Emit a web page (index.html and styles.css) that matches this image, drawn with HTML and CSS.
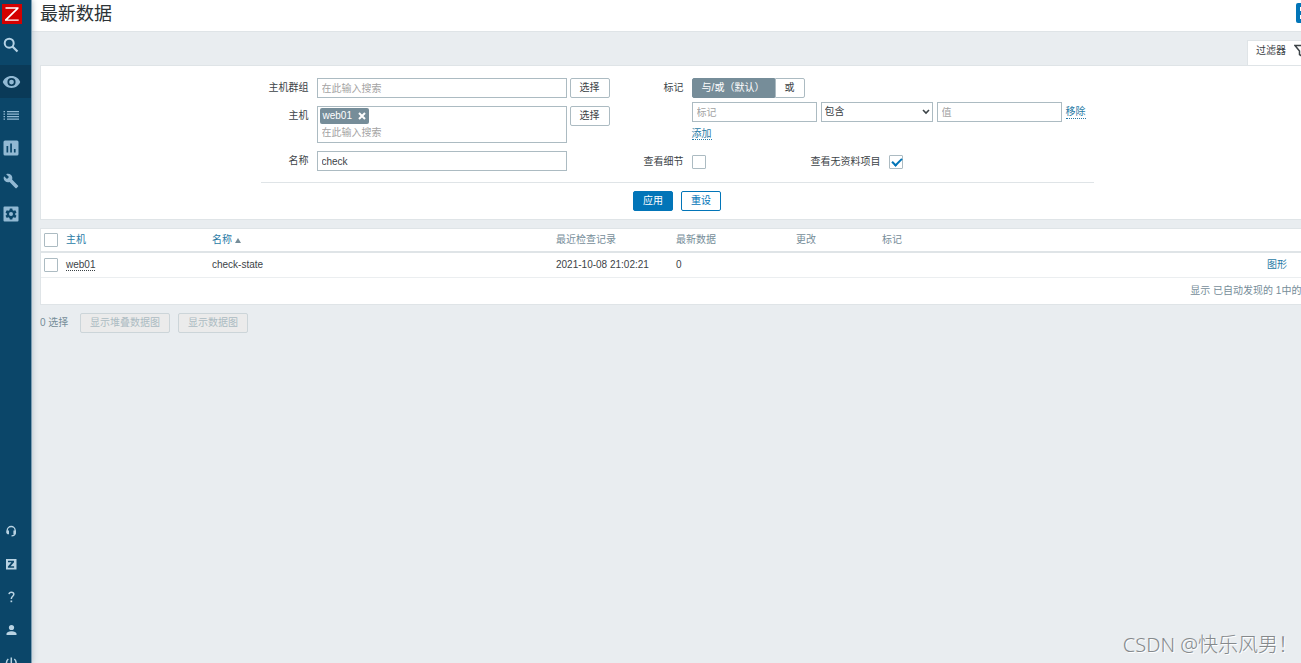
FILE: index.html
```html
<!DOCTYPE html>
<html lang="zh-CN">
<head>
<meta charset="utf-8">
<title>最新数据</title>
<link rel="stylesheet" href="styles.css">
</head>
<body>
<div class="app">
  <aside class="sidebar">
    <a class="logo" href="#" aria-label="Zabbix"><svg viewBox="0 0 20 20"><path d="M3.5 3.3h13v1.4L5.5 15.5h11.2v1.3H3v-1.4L14 4.700H3.500z"/></svg></a>
    <a class="search" href="#" aria-label="搜索"><svg viewBox="0 0 16 16"><circle cx="6.200" cy="6.200" r="4.500" fill="none" stroke="currentColor" stroke-width="2"/><path d="M9.500 9.500l5 5" stroke="currentColor" stroke-width="2.200"/></svg></a>
    <nav class="menu">
      <a class="item active" href="#" aria-label="监测"><svg class="eye" viewBox="0 0 20 14"><path fill-rule="evenodd" d="M10 .8C5.500.8 2.200 3.500.8 7c1.400 3.500 4.700 6.200 9.200 6.200s7.800-2.700 9.200-6.200C17.800 3.500 14.500.8 10 .8zM10 11.300a4.300 4.300 0 1 1 0-8.600 4.300 4.300 0 0 1 0 8.600z"/><circle cx="10" cy="7" r="2.500"/></svg></a>
      <a class="item" href="#" aria-label="资产记录"><svg viewBox="0 0 16 16"><path d="M.5 4H2v1.200H.5zM4 4h12v1.200H4zM.5 6.500H2v1.200H.5zM4 6.500h12v1.200H4zM.5 9H2v1.200H.5zM4 9h12v1.200H4zM.5 11.500H2v1.200H.5zM4 11.500h12v1.200H4z"/></svg></a>
      <a class="item" href="#" aria-label="报表"><svg viewBox="0 0 16 16"><path fill-rule="evenodd" d="M2 .5h12a1.500 1.500 0 0 1 1.500 1.500v12a1.500 1.500 0 0 1-1.500 1.500H2A1.500 1.500 0 0 1 .5 14V2A1.500 1.500 0 0 1 2 .5zM3.500 6v6.500h1.700V6zM7.200 3.500v9h1.700v-9zM10.900 9v3.500h1.700V9z"/></svg></a>
      <a class="item" href="#" aria-label="配置"><svg viewBox="0 0 24 24"><path d="M22.700 19l-9.100-9.100c.9-2.300.4-5-1.500-6.900-2-2-5-2.400-7.400-1.300L9 6 6 9 1.600 4.700C.4 7.100.9 10.100 2.900 12.100c1.900 1.900 4.600 2.400 6.900 1.500l9.100 9.100c.4.4 1 .4 1.400 0l2.300-2.300c.5-.4.5-1.100.1-1.400z"/></svg></a>
      <a class="item" href="#" aria-label="管理"><svg viewBox="0 0 16 16"><path fill-rule="evenodd" d="M1.500.5h13a1 1 0 0 1 1 1v13a1 1 0 0 1-1 1h-13a1 1 0 0 1-1-1v-13a1 1 0 0 1 1-1zM6.800 2.500l-.3 1.700-1.100.6-1.600-.6-1.300 2.200L3.800 7.500v1.200L2.500 9.700l1.300 2.200 1.600-.6 1.100.6.3 1.600h2.500l.3-1.600 1.100-.6 1.600.6 1.200-2.200-1.300-1V7.500l1.300-1.100-1.200-2.200-1.600.6-1.100-.6-.3-1.700z"/><circle cx="8" cy="8" r="2"/></svg></a>
    </nav>
    <nav class="menu support">
      <a class="item" href="#" aria-label="支持"><svg viewBox="0 0 16 16"><path d="M4.200 10V7.500a4 4 0 0 1 8 0V10M12.200 10c0 2.200-1.500 2.800-3.700 2.800" fill="none" stroke="currentColor" stroke-width="1.300"/><path d="M3.500 7.500h2.500v3.700H4.500l-1-1zM10.400 7.500h2.500v2.700l-1 1h-1.500z"/></svg></a>
      <a class="item" href="#" aria-label="Share"><svg viewBox="0 0 16 16"><path fill-rule="evenodd" d="M3 3h10.500v10.500H3zM5 4.800v1.500h3.500L4.900 10.400v1.400h6.200v-1.500H7.500L11 6.200V4.800z"/></svg></a>
      <a class="item" href="#" aria-label="帮助"><svg viewBox="0 0 16 16"><path d="M6 5.200C6.200 3.800 7.100 3.200 8.300 3.200c1.500 0 2.500.8 2.500 2.100C10.800 7.300 8.300 7.300 8.300 10" fill="none" stroke="currentColor" stroke-width="1.500"/><path d="M7.500 11.500h1.700v1.700H7.500z"/></svg></a>
      <a class="item" href="#" aria-label="用户"><svg viewBox="0 0 16 16"><circle cx="8.500" cy="5.500" r="2.600"/><path d="M3.500 13v-1.200c0-1.800 3-2.600 5-2.600s5 .8 5 2.600V13z"/></svg></a>
      <a class="item" href="#" aria-label="退出"><svg viewBox="0 0 16 16"><path d="M8.300 2.500v6M5.300 4a4.800 4.800 0 1 0 6 0" fill="none" stroke="currentColor" stroke-width="1.500"/></svg></a>
    </nav>
  </aside>
  <main class="main">
    <div class="page">
      <header class="header">
        <h1>最新数据</h1>
        <button class="kiosk" type="button" aria-label="全屏"><svg viewBox="0 0 20 20"><path d="M5 8V5h3M12 5h3v3M15 12v3h-3M8 15H5v-3" fill="none" stroke="#fff" stroke-width="2"/></svg></button>
      </header>
      <div class="tabs"><a class="tab" href="#">过滤器<svg viewBox="0 0 14 14"><path d="M1 1.500h12L8.500 7v5.500l-3-2V7z" fill="none" stroke="currentColor" stroke-width="1.500"/></svg></a></div>
      <form class="panel filter">
        <div class="filter-body">
          <div class="fields fields-left">
            <label for="groups">主机群组</label>
            <div class="line"><input class="box wide" id="groups" type="text" placeholder="在此输入搜索"><button class="btn select-btn" type="button">选择</button></div>
            <label for="hosts">主机</label>
            <div class="line"><div class="box wide multi"><span class="chip">web01<button type="button" aria-label="移除 web01"><svg viewBox="0 0 8 8"><path d="M1 1l6 6M7 1L1 7" stroke="currentColor" stroke-width="2"/></svg></button></span><input id="hosts" type="text" placeholder="在此输入搜索"></div><button class="btn select-btn" type="button">选择</button></div>
            <label for="name">名称</label>
            <div class="line"><input class="box wide" id="name" type="text" value="check"></div>
          </div>
          <div class="fields fields-right">
            <span class="caption">标记</span>
            <div class="tags">
              <div class="toggle"><input type="radio" name="op" id="andor" checked><label for="andor">与/或（默认）</label><input type="radio" name="op" id="or"><label for="or">或</label></div>
              <div class="tag-row">
                <input class="box tag-input" type="text" placeholder="标记" aria-label="标记">
                <span class="drop"><select class="box" aria-label="运算符"><option>包含</option></select><svg viewBox="0 0 8 6"><path d="M1 1l3 3 3-3" fill="none" stroke="currentColor" stroke-width="1.600"/></svg></span>
                <input class="box tag-input" type="text" placeholder="值" aria-label="值">
                <a class="dotted" href="#">移除</a>
              </div>
              <div class="add"><a class="dotted" href="#">添加</a></div>
            </div>
            <label for="details">查看细节</label>
            <div class="checks"><input class="check" type="checkbox" id="details"><label for="nodata">查看无资料项目</label><input class="check" type="checkbox" id="nodata" checked></div>
          </div>
        </div>
        <div class="actions"><button class="btn primary" type="button">应用</button><button class="btn outline" type="reset">重设</button></div>
      </form>
      <table class="panel data">
        <colgroup><col class="c-check"><col class="c-host"><col class="c-name"><col class="c-time"><col class="c-value"><col class="c-change"><col><col class="c-graph"></colgroup>
        <thead><tr><th><input class="check" type="checkbox" aria-label="全选"></th><th><a href="#">主机</a></th><th><a href="#">名称<i class="sort"></i></a></th><th>最近检查记录</th><th>最新数据</th><th>更改</th><th>标记</th><th></th></tr></thead>
        <tbody><tr><td><input class="check" type="checkbox" aria-label="选择 check-state"></td><td><a class="host" href="#">web01</a></td><td>check-state</td><td>2021-10-08 21:02:21</td><td>0</td><td></td><td></td><td><a href="#">图形</a></td></tr></tbody>
        <tfoot><tr><td colspan="8">显示 已自动发现的 1中的1</td></tr></tfoot>
      </table>
      <div class="bulk"><span>0 选择</span><button class="btn" type="button" disabled>显示堆叠数据图</button><button class="btn" type="button" disabled>显示数据图</button></div>
    </div>
  </main>
  <div class="watermark">CSDN @快乐风男！</div>
</div>
</body>
</html>
```
FILE: styles.css
```css
* { box-sizing: border-box; }
body { margin: 0; background: #e9edf0; color: #3c4347; }
body, button, input, select { font-family: "Liberation Sans", "Noto Sans CJK SC", sans-serif; font-size: 10px; line-height: 14px; }
a { color: #2a7ba6; text-decoration: none; }
svg { display: block; fill: currentColor; }
.app { display: flex; height: 100vh; overflow: hidden; position: relative; }

.sidebar { flex: 0 0 32px; display: flex; flex-direction: column; background: #0b4669; border-right: 1px solid #7b9db3; box-shadow: 0 0 6px #aebbc4; overflow: hidden; z-index: 1; }
.sidebar a { color: #92b9d3; }
.sidebar .logo { width: 20px; height: 20px; margin: 4px 0 0 2px; background: #d40000; color: #fff; }
.sidebar .search { padding: 13px 0 12px 3px; color: #b4d2e5; }
.sidebar svg { width: 16px; height: 16px; }
.sidebar .logo svg { width: 20px; height: 20px; }
.item { display: flex; align-items: center; height: 33px; padding-left: 3px; }
.item.active { background: #0a3a58; padding-left: 2px; }
.sidebar .eye { width: 19px; height: 14px; }
.support { margin: auto 0 -16px; }
.sidebar .support .item { color: #b9d3e3; }

.main { flex: 1; min-width: 0; overflow: hidden; }
/* The page keeps a gutter that runs past the right edge of the window. */
.page { width: calc(100% + 23px); }
.header { display: flex; justify-content: space-between; align-items: flex-start; height: 32px; padding: 3px 8px; background: #fff; border-bottom: 1px solid #dfe4e7; }
h1 { margin: 0; font-size: 18px; line-height: 22px; font-weight: 400; color: #2c3336; }
.kiosk { width: 20px; height: 20px; padding: 0; border: 0; border-radius: 2px; background: #0275b8; }
.tabs { display: flex; justify-content: flex-end; padding: 8px 10px 0 0; }
.tab { display: flex; gap: 8px; height: 25px; width: 67px; padding: 3px 0 0 8px; background: #fff; border: 1px solid #dfe4e7; border-bottom: 0; color: #3c4347; white-space: nowrap; }
.tab svg { width: 14px; height: 14px; flex: none; }
.panel { margin: 0 10px 0 8px; background: #fff; border: 1px solid #dfe4e7; }

.filter { padding: 12px 0 8px; }
.filter-body { display: flex; justify-content: space-between; width: 833px; margin: 0 auto; padding-bottom: 10px; border-bottom: 1px solid #dfe4e7; }
.fields { display: grid; column-gap: 8px; align-items: start; align-content: start; text-align: right; }
.fields > label, .caption { padding-top: 3px; white-space: nowrap; }
.fields-left { grid-template-columns: 48px auto; row-gap: 8px; }
.fields-right { grid-template-columns: 40px 402px; row-gap: 11px; }
.line { display: flex; align-items: flex-start; gap: 3px; }
.box { height: 20px; padding: 0 4px; border: 1px solid #acbbc2; border-radius: 0; background: #fff; color: #3c4347; outline: 0; }
input::placeholder { color: #a3a3a3; opacity: 1; }
.wide { width: 250px; }
.multi { display: flex; flex-direction: column; align-items: flex-start; height: 37px; padding: 1px 2px; }
.multi input { width: 100%; height: 16px; padding: 0 2px; border: 0; outline: 0; }
.chip { display: flex; align-items: center; gap: 6px; height: 16px; padding: 0 3px; background: #768d99; color: #fff; border-radius: 2px; }
.chip button { padding: 0; border: 0; background: none; color: #fff; }
.chip svg { width: 8px; height: 8px; }
.btn { height: 20px; padding: 0 9px; border: 1px solid #acbbc2; border-radius: 2px; background: #fff; color: #3c4347; white-space: nowrap; }
.select-btn { width: 40px; }
.toggle { display: flex; }
.toggle input { position: absolute; opacity: 0; }
.toggle label { height: 20px; padding: 2px 9px; border: 1px solid #acbbc2; border-radius: 0 2px 2px 0; white-space: nowrap; }
.toggle label:first-of-type { width: 83px; border-radius: 2px 0 0 2px; text-align: center; }
.toggle :checked + label { background: #768d99; border-color: #768d99; color: #fff; }
.tag-row { display: flex; align-items: center; gap: 4px; margin-top: 4px; }
.tag-input { width: 125px; }
.drop { position: relative; width: 112px; }
.drop select { width: 100%; padding: 0 3px; appearance: none; display: block; }
.drop svg { position: absolute; right: 3px; top: 7px; width: 8px; height: 6px; pointer-events: none; }
.dotted { border-bottom: 1px dotted #2a7ba6; line-height: 12px; }
.add { margin-top: 5px; text-align: left; }
.checks { display: flex; align-items: center; height: 20px; }
.checks label { margin: 0 8px 0 105px; }
.check { appearance: none; display: block; width: 14px; height: 14px; margin: 0; border: 1px solid #acbbc2; border-radius: 1px; background: #fff; }
.check:checked::before { content: ""; display: block; width: 8px; height: 4px; margin: 3px 2px; border: solid #0275b8; border-width: 0 0 2px 2px; transform: rotate(-45deg); }
.checks .check:checked::before { margin-top: 2px; }
.actions { display: flex; justify-content: center; gap: 8px; padding-top: 8px; }
.primary, .outline { width: 40px; border-color: #0275b8; }
.primary { background: #0275b8; color: #fff; }
.outline { color: #0275b8; }

.data { width: calc(100% - 18px); margin-top: 8px; border-collapse: separate; border-spacing: 0; table-layout: fixed; }
.data th, .data td { padding: 0 4px; text-align: left; font-weight: 400; white-space: nowrap; }
.data .check { margin-left: -1px; }
.data th { height: 24px; border-bottom: 2px solid #dfe4e7; color: #768d99; }
.data td { height: 25px; border-bottom: 1px solid #ebeef0; }
.data tfoot td { height: 26px; padding-right: 6px; border: 0; text-align: right; color: #768d99; }
.c-check { width: 21px; }
.c-host { width: 146px; }
.c-name { width: 344px; }
.c-time { width: 120px; }
.c-value { width: 120px; }
.c-change { width: 86px; }
.c-graph { width: 50px; }
.sort { display: inline-block; margin-left: 3px; border: solid transparent; border-width: 0 3px 5px; border-bottom-color: #768d99; }
.host { color: #3c4347; border-bottom: 1px dotted #3c4347; }
.bulk { display: flex; align-items: center; padding: 8px; color: #768d99; }
.bulk span { width: 40px; }
.bulk .btn { margin-right: 8px; }
.bulk .btn:disabled { background: #ebebeb; border-color: #ccd5d9; color: #acbbc2; }
.watermark { position: absolute; right: 3px; bottom: 4px; z-index: 2; color: #85898c; font: 300 20px/28px "Noto Sans", "Noto Sans CJK SC", sans-serif; text-shadow: 1px 1px 0 #fff; }
```
